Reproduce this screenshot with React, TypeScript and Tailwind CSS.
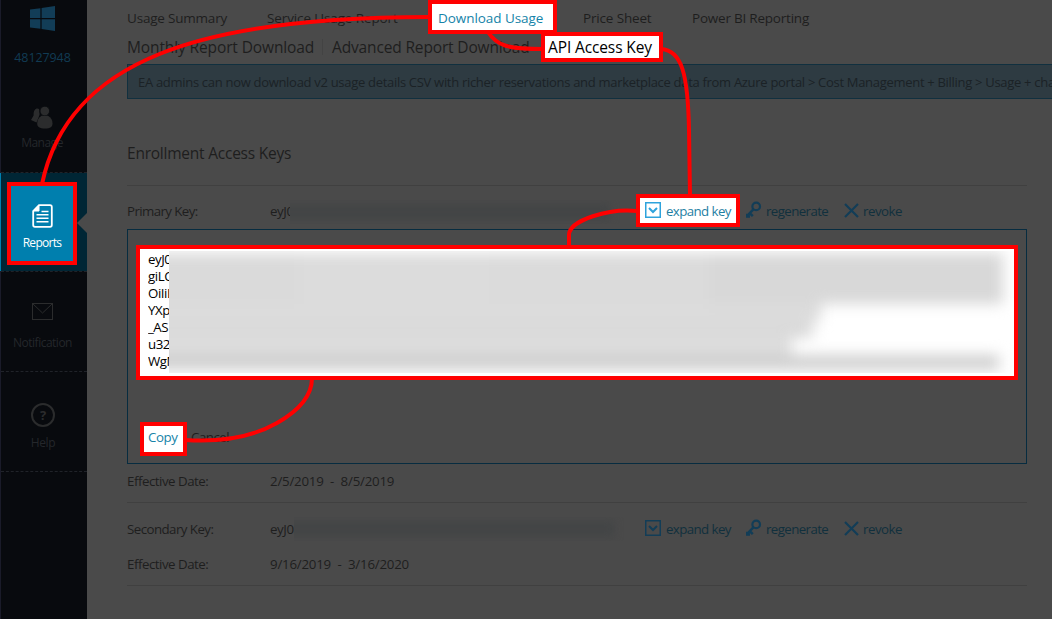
import React from "react";

const KeyIcon = () => (
  <svg width="16" height="18" viewBox="0 0 16 18" fill="none" className="mb-[2px] shrink-0">
    <circle cx="10.2" cy="5.4" r="3.8" stroke="#123d57" strokeWidth="2.2" />
    <path d="M7.6 8.2L1 15M3.6 12L6.8 15.2M1 12.8V15.6H4" stroke="#123d57" strokeWidth="2.5" />
  </svg>
);

const CrossIcon = () => (
  <svg width="15" height="15" viewBox="0 0 15 15" className="mb-px shrink-0">
    <path d="M1 1L14 14M14 1L1 14" stroke="#123d57" strokeWidth="2.2" />
  </svg>
);

const ExpandIcon = ({ lit }: { lit?: boolean }) => (
  <svg width="16" height="16" viewBox="0 0 16 16" fill="none" className="mb-[2px] shrink-0">
    <rect x="0.75" y="0.75" width="14.5" height="14.5" stroke={lit ? "#2ea3dc" : "#123d57"} strokeWidth="1.5" />
    <path d="M4 6L8 10L12 6" stroke={lit ? "#2ea3dc" : "#123d57"} strokeWidth="2" />
  </svg>
);

const KeyActions = ({ lit }: { lit?: boolean }) => (
  <div className="flex h-[33px] items-center text-[#11303d]">
    <div
      className={
        lit
          ? "flex h-[33px] w-[104px] shrink-0 items-center border-4 border-[#ff0000] bg-white pl-[5px] text-[#1f7fa3]"
          : "flex h-[33px] w-[104px] shrink-0 items-center pl-[9px]"
      }
    >
      <ExpandIcon lit={lit} />
      <span className="ml-[5px] pt-[2px] tracking-[-0.6px]">expand key</span>
    </div>
    <div className="ml-[6px] flex w-[98px] shrink-0 items-center">
      <KeyIcon />
      <span className="ml-[4px] pt-[2px] tracking-[-0.6px]">regenerate</span>
    </div>
    <CrossIcon />
    <span className="ml-[4px] pt-[2px] tracking-[-0.5px]">revoke</span>
  </div>
);

const Sidebar = () => (
  <aside className="flex h-full w-[87px] shrink-0 flex-col border-l border-[#1a1b29] bg-[#080a0e] text-[12px] text-[#24272b]">
    <div className="flex h-[73px] flex-col items-center pt-[6px] pr-[3px]">
      <svg width="25" height="25" viewBox="0 0 25 25" fill="#123d57">
        <path d="M0 3.6L10.4 2.2V12H0zM11.6 2L25 0V12H11.6zM0 13.2H10.4V22.8L0 21.4zM11.6 13.2H25V25L11.6 23z" />
      </svg>
      <div className="mt-[17px] text-[12.5px] leading-[20px] tracking-[-0.1px] text-[#113b53]">48127948</div>
    </div>
    <div className="flex h-[100px] flex-col items-center border-b border-dashed border-[#202329] pt-[33px] pr-[4px]">
      <svg width="22" height="23" viewBox="0 0 22 23" fill="#2b2c2d">
        <path d="M5.5 2.5Q9 2 8.3 5.5L8.6 8.5L7.4 12L5.5 16.5L0 14L2.6 9.5Q2.2 4 5.5 2.5z" />
        <circle cx="13.8" cy="5" r="4.8" stroke="#080a0e" strokeWidth="0.8" />
        <path d="M10.5 9.8H17C20 11.5 21.5 14 21.5 17.5C21.5 21 19.5 22.5 14 22.5C8.5 22.5 6.2 21 6.2 17.5C6.2 14 7.8 11.5 10.5 9.8z" />
      </svg>
      <span className="mt-[4px] leading-[20px] tracking-[-0.5px]">Manage</span>
    </div>
    <div className="-ml-px flex h-[98px] items-start border-l border-[#007fae] bg-[#002635]">
      <div className="mt-[9px] ml-[6px] flex h-[83px] w-[70px] shrink-0 flex-col items-center border-4 border-[#ff0000] bg-[#007fae] pt-[18px] text-white">
        <svg width="21" height="24" viewBox="0 0 21 24" fill="none" stroke="#fff">
          <path d="M7 1.2H18Q19.8 1.2 19.8 3V21Q19.8 22.8 18 22.8H3Q1.2 22.8 1.2 21V7z" strokeWidth="1.8" />
          <path d="M1.2 7L7 1.2V7z" fill="#fff" />
          <path d="M9.5 7.5H16.5M4.5 10.7H16.5M4.5 14.2H16.5M4.5 17.7H16.5" strokeWidth="1.5" />
        </svg>
        <span className="mt-[5px] text-[12px] leading-[20px] tracking-[-0.7px]">Reports</span>
      </div>
      <svg width="10" height="20" viewBox="0 0 10 20" className="mt-[40px] shrink-0">
        <path d="M10 0V20L0 10z" fill="#4a4a4a" />
      </svg>
    </div>
    <div className="flex h-[101px] flex-col items-center border-y border-dashed border-[#202329] pt-[31px] pr-[3px]">
      <svg width="21" height="17" viewBox="0 0 21 17" fill="none" stroke="#2b2c2d">
        <rect x="0.5" y="0.5" width="20" height="16" />
        <path d="M0.5 0.5L10.5 10L20.5 0.5" />
      </svg>
      <span className="mt-[13px] leading-[20px] tracking-[-0.5px]">Notification</span>
    </div>
    <div className="flex h-[100px] flex-col items-center border-b border-dashed border-[#202329] pt-[31px] pr-[2px]">
      <div className="flex h-[24px] w-[24px] items-center justify-center rounded-full border-2 border-[#2b2c2d] text-[13px] leading-none font-bold text-[#2b2c2d]">
        ?
      </div>
      <span className="mt-[6px] leading-[20px] tracking-[-0.4px]">Help</span>
    </div>
  </aside>
);

const keyLines = ["eyJ0", "giLC", "OiIiL", "YXp", "_AS", "u32", "WgM"];

const KeyText = () => (
  <div className="flex h-[135px] w-[882px] border-4 border-[#ff0000] bg-white pt-[2px] pl-[8px] text-black">
    <div className="w-[21px] shrink-0 overflow-hidden whitespace-nowrap">
      {keyLines.map((line) => (
        <div key={line} className="h-[17px] leading-[17px] tracking-[-0.45px]">
          {line}
        </div>
      ))}
    </div>
    <div className="h-[122px] grow overflow-hidden">
      <div className="mt-[2px] -ml-[20px] flex flex-col blur-[7px]">
        <div className="flex h-[51px] w-[854px]">
          <div className="w-[150px] bg-[#dadada]" />
          <div className="w-[190px] bg-[#dcdcdc]" />
          <div className="w-[220px] bg-[#dbdbdb]" />
          <div className="grow bg-[#d8d8d8]" />
        </div>
        <div className="h-[17px] w-[672px] bg-[#dcdcdc]" />
        <div className="h-[17px] w-[664px] bg-[#dadada]" />
        <div className="h-[17px] w-[643px] bg-[#dddddd]" />
        <div className="h-[15px] w-[850px] bg-[#cfcfcf]" />
      </div>
    </div>
  </div>
);

export default function App() {
  return (
    <div className="relative flex h-[619px] w-[1052px] overflow-hidden bg-[#4a4a4a] font-['Open_Sans','Noto_Sans',sans-serif] text-[13.3px] whitespace-nowrap text-[#1e1e1e]">
      <Sidebar />
      <main className="flex w-[965px] shrink-0 flex-col pl-[40px]">
        <nav className="flex h-[34px] items-center text-[13.5px] tracking-[-0.16px]">
          <span className="w-[140px] shrink-0 pt-[2px] tracking-[-0.2px]">Usage Summary</span>
          <span className="w-[161px] shrink-0 pt-[2px] tracking-[-0.12px]">Service Usage Report</span>
          <span className="flex h-[34px] w-[129px] shrink-0 items-center border-4 border-[#ff0000] bg-white pt-[2px] pl-[6px] tracking-[-0.06px] text-[#1583a8]">
            Download Usage
          </span>
          <span className="ml-[26px] w-[109px] shrink-0 pt-[2px]">Price Sheet</span>
          <span className="pt-[2px] tracking-[-0.22px]">Power BI Reporting</span>
        </nav>
        <nav className="flex h-[26px] items-center text-[15.5px]">
          <span className="w-[195px] shrink-0 pt-px tracking-[-0.12px]">Monthly Report Download</span>
          <span className="h-[16px] w-px shrink-0 bg-[#434343]" />
          <span className="ml-[9px] w-[209px] shrink-0 pt-px tracking-[-0.15px]">Advanced Report Download</span>
          <span className="flex h-[30px] w-[122px] shrink-0 items-center border-4 border-[#ff0000] bg-white pt-px pl-[3px] tracking-[-0.12px] text-black">
            API Access Key
          </span>
        </nav>
        <div className="mt-[4px] flex h-[35px] w-[940px] items-center border border-[#11303f] bg-[#2e3b42] pt-[2px] pl-[10px] text-[13px] tracking-[-0.3px] text-[#1b2226]">
          EA admins can now download v2 usage details CSV with richer reservations and marketplace data from Azure portal &gt; Cost Management + Billing &gt; Usage + charges
        </div>
        <h1 className="mt-[43px] h-[22px] text-[15.5px] leading-[22px] tracking-[-0.23px]">Enrollment Access Keys</h1>
        <div className="mt-[21px] h-px w-[900px] bg-[#404040]" />
        <div className="flex h-[43px] items-start pt-[8px]">
          <span className="w-[143px] shrink-0 leading-[35px] tracking-[-0.6px]">Primary Key:</span>
          <span className="w-[20px] shrink-0 overflow-hidden leading-[35px] tracking-[-0.4px]">eyJ0</span>
          <div className="mt-[6px] h-[24px] w-[346px] shrink-0 overflow-hidden">
            <div className="mt-[4px] -ml-[10px] h-[16px] w-[330px] bg-[#434546] blur-[4px]" />
          </div>
          <KeyActions lit />
        </div>
        <section className="flex h-[235px] w-[900px] flex-col border border-[#072c40] pt-[15px] pl-[8px]">
          <KeyText />
          <div className="mt-[42px] ml-[4px] flex items-center">
            <span className="flex h-[34px] w-[47px] items-center border-4 border-[#ff0000] bg-white pb-[2px] pl-[4px] tracking-[-0.4px] text-[#1583a8]">
              Copy
            </span>
            <span className="ml-[4px] pb-[2px] tracking-[-0.5px]">Cancel</span>
          </div>
        </section>
        <div className="flex h-[38px] items-center pb-[2px]">
          <span className="w-[143px] shrink-0 tracking-[-0.48px]">Effective Date:</span>
          <span className="tracking-[-0.22px] whitespace-pre">2/5/2019  -  8/5/2019</span>
        </div>
        <div className="h-px w-[900px] bg-[#404040]" />
        <div className="flex h-[43px] items-start pt-[9px]">
          <span className="w-[143px] shrink-0 leading-[35px] tracking-[-0.55px]">Secondary Key:</span>
          <span className="w-[24px] shrink-0 overflow-hidden leading-[35px] tracking-[-0.4px]">eyJ0</span>
          <div className="mt-[5px] h-[24px] w-[342px] shrink-0 overflow-hidden">
            <div className="mt-[4px] -ml-[10px] h-[16px] w-[330px] bg-[#434546] blur-[4px]" />
          </div>
          <KeyActions />
        </div>
        <div className="flex h-[39px] items-center pb-[2px]">
          <span className="w-[143px] shrink-0 tracking-[-0.48px]">Effective Date:</span>
          <span className="tracking-[-0.22px] whitespace-pre">9/16/2019  -  3/16/2020</span>
        </div>
        <div className="h-px w-[900px] bg-[#404040]" />
      </main>
      <svg className="pointer-events-none absolute inset-0" width="1052" height="619" fill="none" stroke="#ff0000" strokeWidth="4">
        <path d="M42 184C68 60 200 17 430 17" />
        <path d="M488 32C497 46 508 49 543 49" />
        <path d="M661 49C682 50 688 75 689 130L690 196" />
        <path d="M637 211C610 208 569 220 569 235V247" />
        <path d="M312 378C312 395 300 410 277 423C247 440 215 442 185 440" />
      </svg>
    </div>
  );
}
